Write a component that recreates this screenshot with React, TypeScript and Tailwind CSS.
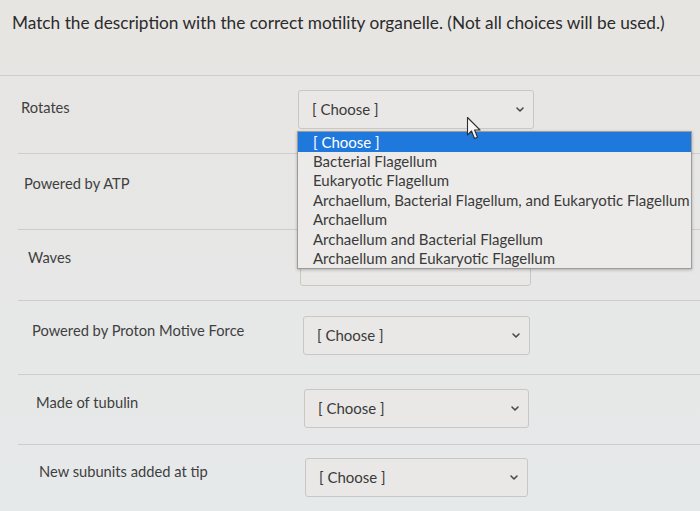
import React from "react";

const options = [
  "[ Choose ]",
  "Bacterial Flagellum",
  "Eukaryotic Flagellum",
  "Archaellum, Bacterial Flagellum, and Eukaryotic Flagellum",
  "Archaellum",
  "Archaellum and Bacterial Flagellum",
  "Archaellum and Eukaryotic Flagellum",
];

function Chevron() {
  return (
    <svg width="10" height="7" viewBox="0 0 10 7" className="shrink-0">
      <path d="M2 2 L5 5 L8 2" fill="none" stroke="#4a4a4a" strokeWidth="1.6" strokeLinecap="round" strokeLinejoin="round" />
    </svg>
  );
}

function SelectBox({ w, covered }: { w: string; covered: boolean }) {
  return (
    <div className={`${w} h-[39px] rounded-[3px] border border-[#c9c7c4] bg-[#e9e8e6] flex items-center justify-between pl-[13px] pr-[8px] text-[15px] text-[#3a3a3a]`}>
      <span className={covered ? "invisible" : ""}>[ Choose ]</span>
      <Chevron />
    </div>
  );
}

type Row = { label: string; pl: string; h: string; lt: string; st: string; lw: string; w: string };

const rows: Row[] = [
  { label: "Rotates", pl: "pl-[3px]", h: "h-[78px]", lt: "pt-[21px]", st: "pt-[14px]", lw: "w-[280px]", w: "w-[236px]" },
  { label: "Powered by ATP", pl: "pl-[6px]", h: "h-[76px]", lt: "pt-[19px]", st: "pt-[15px]", lw: "w-[282px]", w: "w-[232px]" },
  { label: "Waves", pl: "pl-[10px]", h: "h-[71px]", lt: "pt-[17px]", st: "pt-[17px]", lw: "w-[282px]", w: "w-[231px]" },
  { label: "Powered by Proton Motive Force", pl: "pl-[14px]", h: "h-[74px]", lt: "pt-[19px]", st: "pt-[15px]", lw: "w-[285px]", w: "w-[227px]" },
  { label: "Made of tubulin", pl: "pl-[18px]", h: "h-[70px]", lt: "pt-[17px]", st: "pt-[14px]", lw: "w-[286px]", w: "w-[225px]" },
  { label: "New subunits added at tip", pl: "pl-[21px]", h: "h-[70px]", lt: "pt-[16px]", st: "pt-[13px]", lw: "w-[287px]", w: "w-[223px]" },
];

export default function App() {
  return (
    <div
      className="relative w-[700px] h-[511px] overflow-hidden bg-linear-to-b from-[#e7e5e2] to-[#e6e9ea] text-[#3b3b3b]"
      style={{ fontFamily: "Lato, 'Open Sans', sans-serif" }}
    >
      <div className="pl-[12px] pt-[9px] h-[76px] border-b border-[#cfcdca] text-[17.25px] text-[#2b2b2b] leading-[28px]">
        Match the description with the correct motility organelle. (Not all choices will be used.)
      </div>
      <div className="ml-[18px] flex flex-col">
        {rows.map((r, i) => (
          <div key={i} className={`${r.h} flex border-b border-[#cfcdca] relative`}>
            <div className={`${r.lw} shrink-0 whitespace-nowrap ${r.pl} ${r.lt} text-[14.7px] leading-[20px] text-[#3f3f3f]`}>{r.label}</div>
            <div className={`${r.st} relative`}>
              <SelectBox w={r.w} covered={i === 1 || i === 2} />
              {i === 0 && (
                <div className="absolute z-10 left-[-1px] top-[55px] w-[395px] border border-[#9c9c9c] bg-[#ecebe9] shadow-[0_1px_3px_rgba(0,0,0,0.25)] text-[15px] leading-[19.4px] text-[#3a3a3a]">
                  {options.map((o, j) => (
                    <div key={j} className={`pl-[15px] whitespace-nowrap ${j === 0 ? "bg-[#1f79dd] text-white h-[20px] leading-[20px]" : ""}`}>
                      {o}
                    </div>
                  ))}
                </div>
              )}
            </div>
          </div>
        ))}
      </div>
      <svg className="absolute left-[466px] top-[116px] z-20" width="18" height="26" viewBox="0 0 18 26">
        <path d="M1.5 1.5 L1.5 19 L5.5 15 L8.5 22.5 L11.5 21.2 L8.6 14 L14 14 Z" fill="#f6f6f6" stroke="#2e2e2e" strokeWidth="1.1" strokeLinejoin="round" />
      </svg>
    </div>
  );
}
